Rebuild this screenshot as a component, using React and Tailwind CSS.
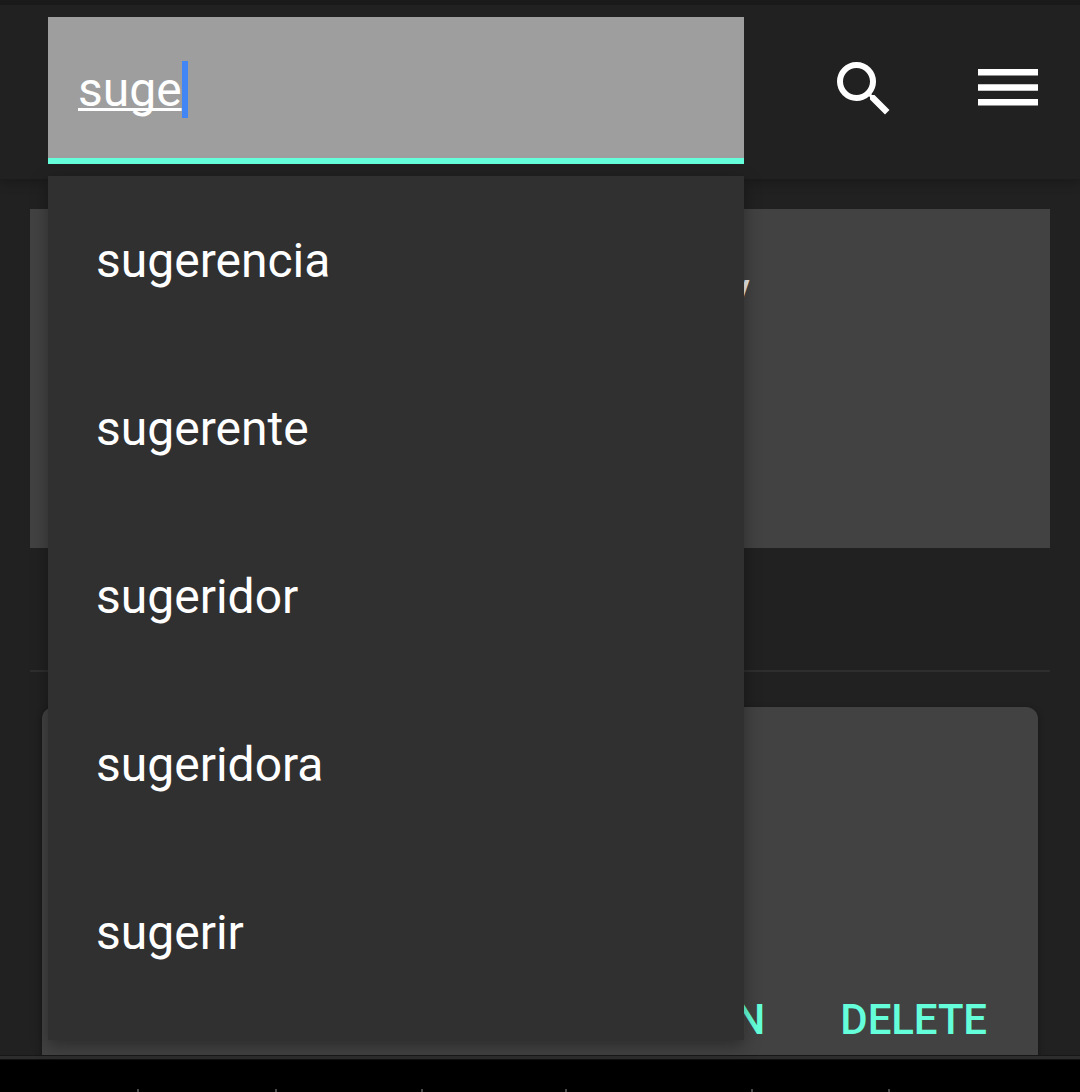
const suggestions = ['sugerencia', 'sugerente', 'sugeridor', 'sugeridora', 'sugerir'];

function Header() {
  return (
    <header className="relative flex h-[179px] shrink-0 items-start border-t-[5px] border-[#1a1a1a] bg-[#212121] pl-12 shadow-[0_2px_12px_rgba(0,0,0,0.3)]">
      <div className="mt-3 flex h-[147px] w-[696px] items-center border-b-[6px] border-[#64ffda] bg-[#9e9e9e] pl-[30px]">
        <span className="mt-1 w-[104px] text-[48px] leading-[56px] underline decoration-[3px] underline-offset-2 [text-decoration-skip-ink:none]">suge</span>
        <span className="mt-1 h-[57px] w-1.5 bg-[#4285f4]" />
      </div>
      <svg className="mt-12 ml-[84px] size-[72px]" viewBox="0 0 24 24" fill="white" aria-label="Search">
        <path d="M15.5 14h-.79l-.28-.27A6.47 6.47 0 0 0 16 9.5 6.5 6.5 0 1 0 9.5 16c1.61 0 3.09-.59 4.23-1.57l.27.28v.79l5 4.99L20.49 19l-4.99-5zm-6 0C7.01 14 5 11.99 5 9.5S7.01 5 9.5 5 14 7.01 14 9.5 11.99 14 9.5 14z" />
      </svg>
      <svg className="mt-16 ml-[78px] h-[37px] w-[60px]" viewBox="0 0 60 37" fill="white" aria-label="Menu">
        <path d="M0 0h60v6.6H0zM0 15.2h60v6.6H0zM0 30h60v6.6H0z" />
      </svg>
    </header>
  );
}

function SuggestionMenu() {
  return (
    <ul className="absolute top-[176px] left-12 h-[864px] w-[696px] overflow-hidden bg-[#303030] shadow-[0_6px_16px_rgba(0,0,0,0.35)]">
      {suggestions.map((word) => (
        <li key={word} className="flex h-[168px] items-center pt-0.5 pl-12 text-[48px] leading-[56px]">
          {word}
        </li>
      ))}
    </ul>
  );
}

export default function App() {
  return (
    <div className="relative flex h-[1092px] w-[1080px] flex-col overflow-hidden bg-[#212121] font-[Roboto,sans-serif] text-white">
      <Header />
      <main className="flex h-[876px] shrink-0 flex-col overflow-hidden px-[30px] pt-[30px]">
        <section className="flex h-[339px] shrink-0 justify-end bg-[#424242] pt-[53px] pr-[300px] text-[48px] leading-[56px] text-[#eeeeee]">
          y
        </section>
        <hr className="mt-[122px] h-0.5 shrink-0 border-0 bg-[#2e2e2e]" />
        <section className="mx-3 mt-[35px] flex h-[380px] shrink-0 items-start justify-end gap-[75px] rounded-xl bg-[#424242] pt-[288px] pr-[51px] text-[42px] leading-[50px] font-medium tracking-[-0.1px] text-[#64ffda] shadow-[0_2px_6px_rgba(0,0,0,0.35)]">
          <span>N</span>
          <span>DELETE</span>
        </section>
      </main>
      <footer className="flex h-[37px] shrink-0 items-end border-t border-[#171717] bg-black">
        <div className="flex h-full w-full flex-col justify-between border-t-[3px] border-[#2d2d2d]">
          <div className="h-px bg-[#111]" />
          <div className="grid h-[3px] grid-cols-[139px_138px_146px_144px_186px_137px] divide-x-2 divide-[#484848]">
            <i /><i /><i /><i /><i /><i className="border-r-2 border-[#484848]" />
          </div>
        </div>
      </footer>
      <SuggestionMenu />
    </div>
  );
}
